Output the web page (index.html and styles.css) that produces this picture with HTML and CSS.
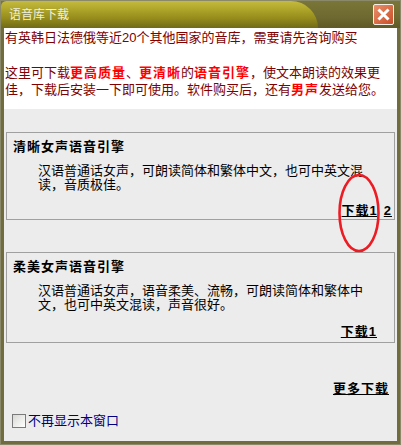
FILE: index.html
```html
<!DOCTYPE html>
<html lang="zh-CN">
<head>
<meta charset="utf-8">
<title>语音库下载</title>
<link rel="stylesheet" href="styles.css">
</head>
<body>
<div class="window">
  <div class="titlebar">
    <div class="title-tab">语音库下载</div>
    <button class="close" type="button" aria-label="关闭">
      <svg width="15" height="15" viewBox="0 0 15 15"><path d="M2.5 2.5l10 10M12.5 2.5l-10 10" stroke="#fff" stroke-width="3" fill="none"/></svg>
    </button>
  </div>
  <div class="content">
    <div class="intro">
      <p>有英韩日法德俄等近20个其他国家的音库，需要请先咨询购买</p>
      <p class="gap">这里可下载<b>更高质量</b>、<b>更清晰</b>的<b>语音引擎</b>，使文本朗读的效果更<br>佳，下载后安装一下即可使用。软件购买后，还有<b>男声</b>发送给您。</p>
    </div>
    <div class="main">
      <section class="card first">
        <h2>清晰女声语音引擎</h2>
        <p class="desc">汉语普通话女声，可朗读简体和繁体中文，也可中英文混<br>读，音质极佳。</p>
        <div class="links"><a href="#">下载1</a><a href="#">2</a></div>
      </section>
      <section class="card second">
        <h2>柔美女声语音引擎</h2>
        <p class="desc">汉语普通话女声，语音柔美、流畅，可朗读简体和繁体中<br>文，也可中英文混读，声音很好。</p>
        <div class="links"><a href="#">下载1</a></div>
      </section>
      <div class="more"><a href="#">更多下载</a></div>
      <label class="check"><span class="box"></span>不再显示本窗口</label>
    </div>
    <svg class="ring" width="44" height="80" viewBox="0 0 44 80"><ellipse cx="22" cy="40" rx="19.5" ry="38" fill="none" stroke="#ed1c24" stroke-width="2.6"/></svg>
  </div>
</div>
</body>
</html>
```
FILE: styles.css
```css
* { box-sizing: border-box; }
html, body { margin: 0; padding: 0; }
body {
  width: 401px;
  height: 445px;
  overflow: hidden;
  font-family: "Liberation Sans", "Noto Sans CJK SC", sans-serif;
  font-size: 13px;
}
.window {
  position: relative;
  width: 401px;
  height: 445px;
  display: flex;
  flex-direction: column;
  background: #706c3e;
  border: 1px solid #8a8a6a;
  padding: 0 3px 3px;
}
.titlebar {
  height: 27px;
  margin: 0 -3px;
  flex: none;
  display: flex;
  justify-content: space-between;
  background: linear-gradient(#7a7638, #6e6930 60%, #5f5a26);
}
.title-tab {
  width: 317px;
  padding: 6px 0 0 8px;
  border-radius: 6px 30px 0 0;
  background: linear-gradient(#c4bb3e 0, #aba228 35%, #948b1c 65%, #6f6a18 100%);
  color: #f0f0dc;
  font-size: 12px;
  line-height: 17px;
}
.close {
  width: 21px;
  height: 21px;
  margin: 3px 6px 0 0;
  padding: 0;
  display: flex;
  align-items: center;
  justify-content: center;
  border: 1px solid #f4f0e8;
  border-radius: 2px;
  background: linear-gradient(135deg, #e8906a, #c94e28);
}
.content {
  flex: 1;
  display: flex;
  flex-direction: column;
  background: #ececec;
  position: relative;
}
.intro {
  height: 81px;
  flex: none;
  padding: 1px 0 0 1px;
  background: #fff;
  color: #800000;
  line-height: 17px;
}
.intro p { margin: 0; white-space: nowrap; }
.intro .gap { margin-top: 18px; }
.intro b { color: #f00; letter-spacing: 1px; }
.main {
  flex: 1;
  padding: 23px 2px 0 2px;
  display: flex;
  flex-direction: column;
}
.card {
  height: 88px;
  border: 1px solid #a0a0a0;
  padding: 5px 6px 0;
  display: flex;
  flex-direction: column;
  color: #000;
}
.second { height: 91px; margin-top: 32px; }
.card h2 {
  margin: 0;
  font-size: 13px;
  font-weight: bold;
  line-height: 18px;
  letter-spacing: 1px;
}
.desc {
  margin: 8px 0 0 25px;
  line-height: 14px;
  white-space: nowrap;
}
.links {
  margin-top: auto;
  padding-bottom: 0;
  display: flex;
  justify-content: flex-end;
  gap: 6px;
  line-height: 16px;
  font-weight: bold;
  letter-spacing: 1px;
}
.first .links { margin-right: -4px; }
.second .links { margin-right: 11px; padding-bottom: 2px; }
a { color: #000; text-decoration: underline; }
.more {
  margin: 37px 6px 0 0;
  text-align: right;
  font-weight: bold;
  line-height: 17px;
  letter-spacing: 1px;
}
.check {
  margin: 16px 0 0 6px;
  display: flex;
  align-items: center;
  gap: 2px;
  color: #000080;
  line-height: 15px;
}
.box {
  width: 14px;
  height: 14px;
  border: 1px solid #7a7a7a;
  background: linear-gradient(135deg, #d8d8d4, #fff);
}
.ring {
  position: absolute;
  left: 333px;
  top: 145px;
}
```
